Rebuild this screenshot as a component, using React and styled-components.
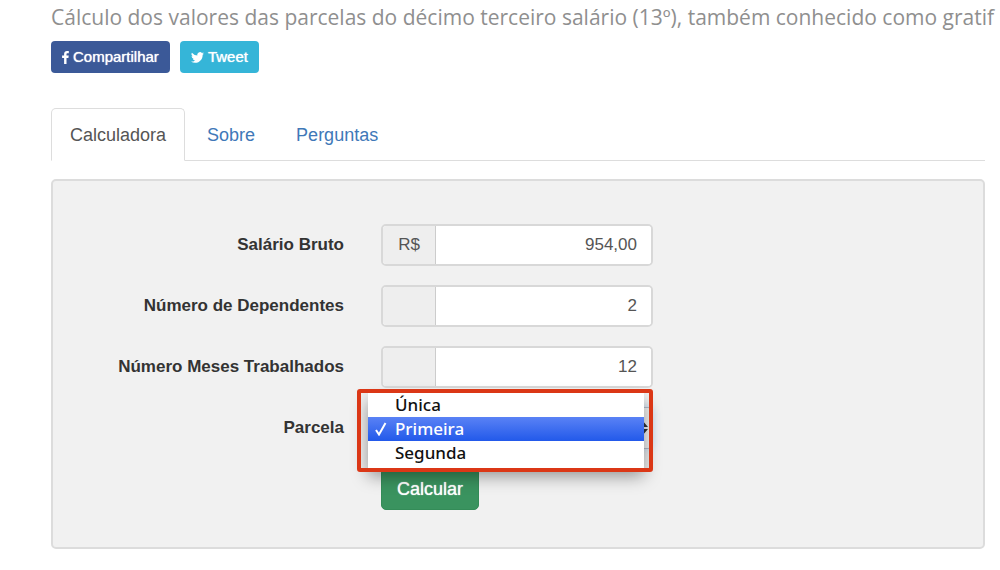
import { useState } from "react";
import styled, { createGlobalStyle } from "styled-components";

const fields = [
  { id: "salario", label: "Salário Bruto", addon: "R$", value: "954,00" },
  { id: "dependentes", label: "Número de Dependentes", addon: "", value: "2" },
  { id: "meses", label: "Número Meses Trabalhados", addon: "", value: "12" },
];

const options = ["Única", "Primeira", "Segunda"];

const App = () => {
  const [parcela, setParcela] = useState("Primeira");

  return (
    <>
      <GlobalStyle />
      <Page>
        <Lead>
          Cálculo dos valores das parcelas do décimo terceiro salário (13º),
          também conhecido como gratif
        </Lead>
        <Share>
          <ShareButton type="button" $color="#3b5998">
            <svg width="7" height="13" viewBox="0 0 7 13" aria-hidden="true">
              <path d="M6.8.1v2.1H5.6c-.9 0-1.1.4-1.1 1v1.4h2.2l-.3 2.3H4.5V13H2.1V6.9H.1V4.6h2V2.900C2.100 1 3.300 0 5 0c.8 0 1.500.1 1.800.1z" />
            </svg>
            Compartilhar
          </ShareButton>
          <ShareButton type="button" $color="#35b5d8">
            <svg width="13" height="11" viewBox="0 0 24 20" aria-hidden="true">
              <path d="M24 2.400a10 10 0 0 1-2.800.8A5 5 0 0 0 23.300.500a10 10 0 0 1-3.100 1.200 4.900 4.900 0 0 0-8.400 4.500A14 14 0 0 1 1.700 1a4.900 4.900 0 0 0 1.500 6.600 5 5 0 0 1-2.200-.6v.1a4.900 4.900 0 0 0 3.900 4.800 5 5 0 0 1-2.200.1 4.900 4.900 0 0 0 4.600 3.400A10 10 0 0 1 0 17.500 14 14 0 0 0 7.500 19.700c9.100 0 14-7.500 14-14v-.6A10 10 0 0 0 24 2.400z" />
            </svg>
            Tweet
          </ShareButton>
        </Share>

        <Tabs>
          <Tab href="#calculadora" $active>
            Calculadora
          </Tab>
          <Tab href="#sobre">Sobre</Tab>
          <Tab href="#perguntas">Perguntas</Tab>
        </Tabs>

        <Panel>
          {fields.map((field) => (
            <Row key={field.id}>
              <Label htmlFor={field.id}>{field.label}</Label>
              <InputGroup>
                <Addon>{field.addon}</Addon>
                <Input id={field.id} defaultValue={field.value} />
              </InputGroup>
            </Row>
          ))}
          <Row>
            <Label htmlFor="parcela">Parcela</Label>
            <SelectWrap>
              <Select
                id="parcela"
                value={parcela}
                onChange={(e) => setParcela(e.target.value)}
              >
                {options.map((option) => (
                  <option key={option}>{option}</option>
                ))}
              </Select>
              <Arrows width="12" height="16" viewBox="0 0 12 16">
                <path d="M6 0l6 7H0zM6 16l6-7H0z" />
              </Arrows>
              <Highlight>
                <Menu role="listbox" aria-label="Parcela">
                  {options.map((option) => (
                    <Option
                      key={option}
                      role="option"
                      aria-selected={option === parcela}
                      $selected={option === parcela}
                      onClick={() => setParcela(option)}
                    >
                      {option === parcela && (
                        <svg width="12" height="14" viewBox="0 0 12 14">
                          <path d="M1 8l3 4.500L10.500 1" />
                        </svg>
                      )}
                      <span>{option}</span>
                    </Option>
                  ))}
                </Menu>
              </Highlight>
            </SelectWrap>
          </Row>
          <Row>
            <Submit type="submit">Calcular</Submit>
          </Row>
        </Panel>
      </Page>
    </>
  );
};

const GlobalStyle = createGlobalStyle`
  * {
    box-sizing: border-box;
  }
  body {
    margin: 0;
    background: white;
    color: #333;
    font: 18px/24px "Liberation Sans", Arial, sans-serif;
  }
  button, input, select {
    font: inherit;
  }
`;

const Page = styled.main`
  padding: 2px 15px 20px 51px;
`;

const Lead = styled.p`
  margin: 0 -15px 0 0;
  overflow: hidden;
  color: #8f8f8f;
  font: 21px/30px "Open Sans", sans-serif;
  white-space: nowrap;
`;

const Share = styled.div`
  display: flex;
  gap: 10px;
  margin-top: 9px;
`;

const ShareButton = styled.button`
  display: flex;
  align-items: center;
  gap: 4px;
  height: 32px;
  padding: 0 11px;
  border: 0;
  border-radius: 4px;
  background: ${({ $color }) => $color};
  color: white;
  font-size: 15px;
  text-shadow: 0 0 1px white;
  svg {
    fill: white;
  }
`;

const Tabs = styled.nav`
  display: flex;
  gap: 3px;
  margin-top: 35px;
  border-bottom: 1px solid #ddd;
`;

const Tab = styled.a`
  margin-bottom: -1px;
  padding: 14px 18px 13px;
  border: 1px solid ${({ $active }) => ($active ? "#ddd" : "transparent")};
  border-bottom-color: ${({ $active }) => ($active ? "white" : "transparent")};
  border-radius: 5px 5px 0 0;
  color: ${({ $active }) => ($active ? "#555" : "#4078b8")};
  text-decoration: none;
`;

const Panel = styled.form`
  display: grid;
  gap: 19px;
  margin-top: 18px;
  padding: 43px 0 37px;
  border: 2px solid #dcdcdc;
  border-radius: 5px;
  background: #f1f1f1;
`;

const Row = styled.div`
  display: grid;
  grid-template-columns: 291fr 272fr 293fr;
  column-gap: 37px;
  align-items: center;
`;

const Label = styled.label`
  font-size: 17px;
  font-weight: bold;
  text-align: right;
  white-space: nowrap;
`;

const InputGroup = styled.div`
  display: flex;
  height: 42px;
  border: 2px solid #d8d8d8;
  border-radius: 5px;
  background: white;
  font-size: 17px;
  overflow: hidden;
`;

const Addon = styled.span`
  flex: 0 0 53px;
  border-right: 1px solid #ccc;
  background: #eee;
  color: #555;
  line-height: 38px;
  text-align: center;
`;

const Input = styled.input`
  flex: 1;
  min-width: 0;
  padding: 0 14px;
  border: 0;
  background: white;
  color: #555;
  text-align: right;
`;

const SelectWrap = styled.div`
  position: relative;
  height: 42px;
`;

const Select = styled.select`
  width: 100%;
  height: 42px;
  padding: 0 14px;
  border: 1px solid #b4bccb;
  border-radius: 5px;
  background: #f3f3f3;
  color: #555;
  appearance: none;
  box-shadow: 0 0 8px #c4dcf5;
`;

const Arrows = styled.svg`
  position: absolute;
  top: 13px;
  right: 5px;
  fill: #333;
`;

/* red frame around the open menu */
const Highlight = styled.div`
  position: absolute;
  top: -18px;
  left: -24px;
  right: 0;
  z-index: 1;
  padding: 4px 9px 4px 11px;
  &::after {
    content: "";
    position: absolute;
    inset: 0;
    border: 4px solid #db3716;
    border-radius: 3px;
    pointer-events: none;
  }
`;

const Menu = styled.ul`
  margin: 0;
  padding: 0 0 3px;
  background: white;
  box-shadow: 0 8px 16px rgba(0, 0, 0, 0.4);
  font: 500 17px/24px "Noto Sans", sans-serif;
  list-style: none;
`;

const Option = styled.li`
  position: relative;
  padding-left: 27px;
  background: ${({ $selected }) =>
    $selected ? "linear-gradient(#5a82f5, #2259ea)" : "white"};
  color: ${({ $selected }) => ($selected ? "white" : "#111")};
  svg {
    position: absolute;
    top: 5px;
    left: 7px;
    fill: none;
    stroke: white;
    stroke-width: 2;
  }
`;

const Submit = styled.button`
  grid-column: 2;
  justify-self: start;
  height: 42px;
  padding: 0 15px;
  border: 1px solid #348c58;
  border-radius: 5px;
  background: #3a935f;
  color: white;
  text-shadow: 0 0 1px white;
`;

export default App;
